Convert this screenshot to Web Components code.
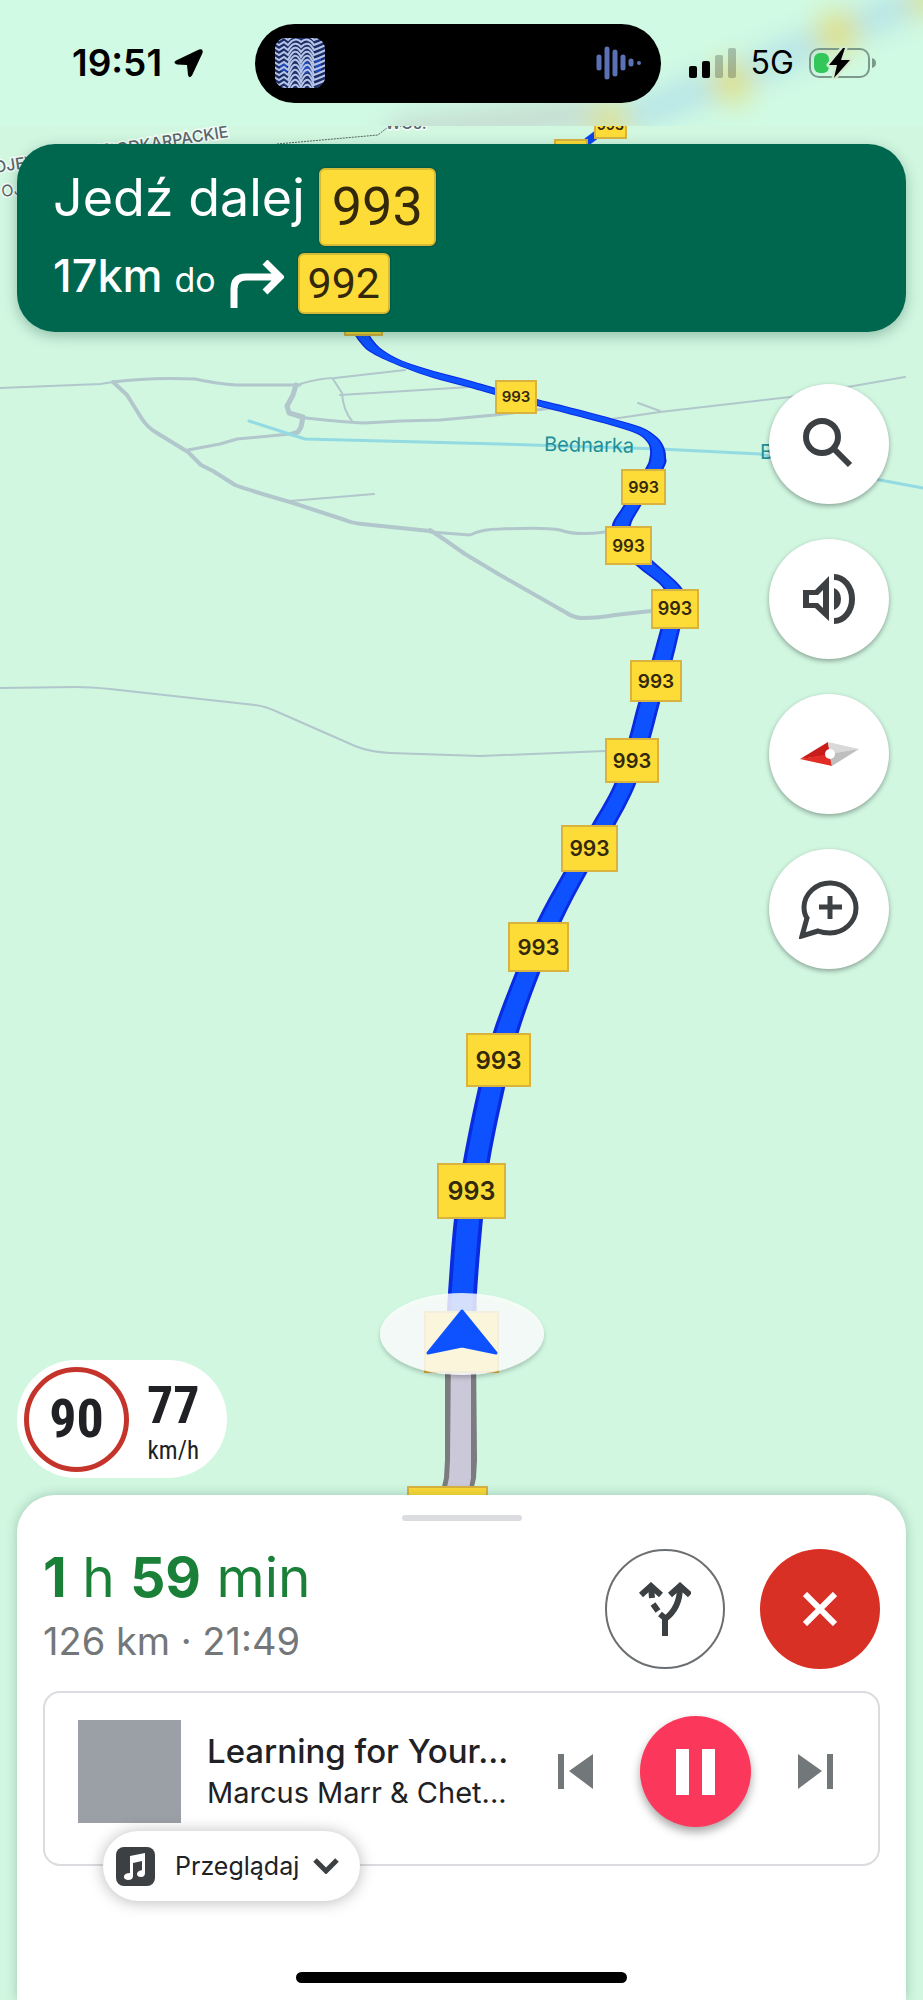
<!DOCTYPE html>
<html lang="pl">
<head>
<meta charset="utf-8">
<meta name="viewport" content="width=device-width, initial-scale=1">
<title>Nawigacja</title>
<style>
body { margin: 0; font-family: Inter, "Liberation Sans", sans-serif; background: #d1f7e1; }
</style>
</head>
<body>
<nav-screen></nav-screen>
<script>
const define = (name, html, setup) => {
  const template = document.createElement('template');
  template.innerHTML = html;
  customElements.define(name, class extends HTMLElement {
    constructor() {
      super();
      this.attachShadow({ mode: 'open' }).append(template.content.cloneNode(true));
    }
    connectedCallback() { if (setup) setup(this.shadowRoot, this); }
  });
};

/* Map canvas: roads, route, shields and the position marker */
const SHIELDS = [
  [344, 305, 39, 31, 0], [554, 139, 34, 26, 0], [594, 110, 33, 29, 14],
  [495, 380, 42, 34, 15], [621, 469, 45, 36, 16], [605, 526, 47, 39, 17],
  [651, 589, 48, 40, 18], [630, 660, 52, 42, 19], [605, 738, 54, 45, 20],
  [561, 825, 57, 47, 21], [508, 922, 61, 50, 22], [466, 1033, 65, 54, 24],
  [437, 1163, 69, 56, 25], [424, 1311, 75, 62, 0], [407, 1486, 81, 60, 0]
];
/* left edge x,y and right edge x,y of the route ribbon */
const ROUTE = [
  [352,330,367,330],[358,340,373,340],[370,352,383,350],[397,365,403,361],[433,378,434,371],
  [467,387,468,380],[495,395,496,388],[537,406,537,399],[580,417,581,410],[613,426,614,419],
  [637,434,641,427],[647,442,657,437],[650,450,664,447],[649,460,666,457],[645,469,664,468],
  [623,506,641,506],[612,525,631,525],[614,545,632,541],[639,568,652,560],[663,588,682,588],
  [667,608,686,608],[660,630,680,630],[652,659,673,659],[638,703,660,703],[629,737,651,737],
  [614,784,636,784],[592,824,616,824],[563,873,587,873],[537,921,562,921],[515,973,540,973],
  [493,1032,519,1032],[478,1088,505,1088],[463,1161,490,1161],[454,1219,483,1219],
  [448,1293,477,1293],[447,1318,477,1318]
];
const curve = pts => pts.slice(0, -1).map((p, i) => {
  const a = pts[i - 1] || p, q = pts[i + 1], b = pts[i + 2] || q;
  return `C${p[0] + (q[0] - a[0]) / 6} ${p[1] + (q[1] - a[1]) / 6} ${q[0] - (b[0] - p[0]) / 6} ${q[1] - (b[1] - p[1]) / 6} ${q[0]} ${q[1]}`;
}).join('');
const ribbon = inset => {
  const at = (r, t) => [r[0] + (r[2] - r[0]) * t, r[1] + (r[3] - r[1]) * t];
  const left = ROUTE.map(r => at(r, inset));
  const right = ROUTE.map(r => at(r, 1 - inset)).reverse();
  return `M${left[0]}${curve(left)}L${right[0]}${curve(right)}Z`;
};

define('route-map', `
<style>
:host { display: block; overflow: hidden; }
svg { display: block; width: 100%; height: 100%; }
.road { fill: none; stroke: #b1c7cb; stroke-linejoin: round; stroke-linecap: round; }
.river { fill: none; stroke: #93dae2; stroke-width: 3; stroke-linejoin: round; stroke-linecap: round; }
.shield rect { fill: #fedc38; stroke: #d9b340; stroke-width: 2; }
.shield text { fill: #33290a; font-weight: 600; text-anchor: middle; }
.place { fill: #1d8f99; font-size: 20px; }
.region { fill: #59666b; stroke: #f3fdf7; stroke-width: 3; paint-order: stroke; font-size: 16px; font-weight: 500; }
</style>
<svg viewBox="0 0 923 2000" preserveAspectRatio="xMidYMin slice" role="img" aria-label="Mapa">
  <path d="M277 144L378 135L388 127L440 124" fill="none" stroke="#56655f" stroke-dasharray="2 1"/>
  <g class="region">
    <text x="229" y="137" text-anchor="end" transform="rotate(-9 229 137)">PODKARPACKIE</text>
    <text x="-5" y="173" transform="rotate(-9 -5 173)">OJEWÓDZTWO</text>
    <text x="2" y="197" transform="rotate(-7 2 197)" font-weight="400">OJ.</text>
    <text x="385" y="129">WOJ.</text>
  </g>
  <g class="road" stroke-width="2">
    <path d="M0 388L100 384L120 381"/>
    <path d="M300 384Q320 378 335 378L405 370"/>
    <path d="M333 379L342 393Q343 410 352 421"/>
    <path d="M340 395L470 387"/>
    <path d="M290 501L374 494"/>
    <path d="M0 688L75 687Q90 687 110 689L255 705Q265 706 280 713L355 746Q370 752 390 753L480 756L605 751"/>
    <path d="M605 420L660 412L790 397L905 377M638 403L660 411"/>
  </g>
  <g class="road" stroke-width="3">
    <path d="M113 382Q150 377 195 379Q225 385 240 385L300 385"/>
    <path d="M290 434L237 439L220 444L188 450"/>
    <path d="M298 417Q340 422 365 423L400 421L440 420L495 415L560 407"/>
    <path d="M430 532L470 535Q482 529 500 529Q545 527 560 530Q575 536 605 532"/>
  </g>
  <g class="road" stroke-width="4">
    <path d="M113 382L127 395L142 419Q148 428 157 433L188 452L201 465L213 471L235 485Q245 489 290 502L345 520Q352 523 362 524L430 531"/>
    <path d="M430 530L445 540L465 554L500 575L565 612Q574 618 582 618Q600 618 615 615L651 611"/>
  </g>
  <g class="road" stroke-width="5">
    <path d="M296 385L293 395L287 406L289 413L303 417L301 427L298 432L292 434"/>
  </g>
  <path class="river" d="M249 421L305 439L500 444L660 449L760 454L880 480L923 488"/>
  <text class="place" x="544" y="451" transform="rotate(1 544 451)">Bednarka</text>
  <text class="place" x="760" y="459">Bednarka</text>
  <path d="M445 1350L445 1460L444 1478L439 1500H471L476 1478L477 1460L476 1350Z" fill="#7b7b80"/>
  <path d="M451 1350L450 1460L449 1478L444 1500H467L471 1478L471 1460L471 1350Z" fill="#cbc8d9"/>
  <path d="M580 150L588 141L608 126L640 118" fill="none" stroke="#0a45ee" stroke-width="8"/>
  <path id="edge" fill="#0a2be0"/>
  <path id="core" fill="#0e51ff"/>
  <g id="shields"></g>
  <filter id="drop" x="-20%" y="-20%" width="140%" height="150%"><feDropShadow dx="0" dy="3" stdDeviation="2" flood-color="#000" flood-opacity=".25"/></filter>
  <ellipse cx="462" cy="1334" rx="82" ry="41" fill="#fff" fill-opacity=".8" filter="url(#drop)"/>
  <path d="M462 1311L496 1353L462 1346L428 1353Z" fill="#0e51ff" stroke="#0e51ff" stroke-width="3" stroke-linejoin="round"/>
</svg>`, root => {
  root.getElementById('edge').setAttribute('d', ribbon(0));
  root.getElementById('core').setAttribute('d', ribbon(0.13));
  root.getElementById('shields').innerHTML = SHIELDS.map(([x, y, w, h, size]) =>
    `<g class="shield"><rect x="${x + 1}" y="${y + 1}" width="${w - 2}" height="${h - 2}"/>` +
    (size ? `<text x="${x + w / 2}" y="${Math.round(y + h / 2 + size * 0.36)}" font-size="${size}">993</text>` : '') + '</g>').join('');
});

define('status-bar', `
<style>
:host { display: grid; grid-template-columns: minmax(0, 1fr) 406px minmax(0, 1fr); align-items: center; box-sizing: border-box; height: 126px; padding-right: 8px; position: relative; overflow: hidden; background: #d0fae3; color: #000; }
.haze { position: absolute; inset: 0; width: 100%; height: 100%; }
.left, .right, .island { position: relative; display: flex; align-items: center; }
.left { padding-left: 72px; gap: 12px; }
.time { font-size: 37px; font-weight: 600; line-height: 44px; }
.island { height: 79px; box-sizing: border-box; padding: 0 20px; border-radius: 40px; background: #000; justify-content: space-between; }
.right { padding-left: 28px; gap: 15px; }
.net { font-size: 32px; font-weight: 400; line-height: 40px; }
svg { display: block; flex: none; }
</style>
<svg class="haze" viewBox="0 0 923 126" preserveAspectRatio="xMidYMin slice" aria-hidden="true">
  <filter id="b" x="-20%" y="-60%" width="140%" height="220%"><feGaussianBlur stdDeviation="14"/></filter>
  <g filter="url(#b)">
    <path d="M390 135L600 112" stroke="#c3d6cd" stroke-width="26"/>
    <path d="M600 128L732 78L837 34L930 -6" stroke="#b2e0e8" stroke-width="26" fill="none"/>
    <g fill="#e0dd7c"><circle cx="611" cy="121" r="18"/><circle cx="732" cy="82" r="20"/><circle cx="837" cy="33" r="21"/><circle cx="925" cy="0" r="16"/></g>
  </g>
</svg>
<div class="left">
  <span class="time">19:51</span>
  <svg width="29" height="29" viewBox="0 0 29 29"><path d="M25 .5L2 11.500Q-1.500 14 3 15.500L13 16L14 26Q15 30 18 26.500L28.500 4Q29.500 -1 25 .5Z"/></svg>
</div>
<div class="island">
  <svg width="50" height="50" viewBox="0 0 50 50">
    <clipPath id="c"><rect width="50" height="50" rx="11"/></clipPath>
    <g clip-path="url(#c)"><rect width="50" height="50" fill="#1d2f66"/><path d="M4 26L12 24V34L6 33ZM24 30L32 20L36 34L28 36ZM40 22L46 20V34H40Z" fill="#2348b8"/><g id="waves" fill="none" stroke="#b7c6e8" stroke-width="2"></g></g>
  </svg>
  <svg width="45" height="36" viewBox="0 0 45 36" stroke="#5a72b4" stroke-width="5" stroke-linecap="round"><path d="M3 12V23M11 4V32M19 7V29M27 12V23M35 16V19"/><path d="M43 18V18" stroke-width="4"/></svg>
</div>
<div class="right">
  <svg width="47" height="30" viewBox="0 0 47 30"><rect y="18" width="8" height="12" rx="2"/><rect x="13" y="13" width="8" height="17" rx="2"/><g fill="#000" fill-opacity=".22"><rect x="26" y="7" width="8" height="23" rx="2"/><rect x="39" width="8" height="30" rx="2"/></g></svg>
  <span class="net">5G</span>
  <svg width="67" height="32" viewBox="0 0 67 32"><rect x="1" y="2" width="59" height="28" rx="9" fill="none" stroke="#7b9a8c" stroke-width="2"/><path d="M63 11Q67 12 67 16T63 21Z" fill="#7b9a8c"/><rect x="5" y="6" width="15" height="20" rx="6" fill="#33c759"/><path d="M34 1L20 18H28L25 31L41 13H32L36 1Z" stroke="#d3eccf" stroke-width="5" stroke-linejoin="round"/><path d="M34 1L20 18H28L25 31L41 13H32L36 1Z"/></svg>
</div>`, root => {
  /* ripples with a folded middle, spaced widely enough to stay apart on the slopes */
  let lines = '';
  for (let i = 0; i < 14; i++) {
    const y = -1 + i * 5, k = Math.min(i, 6);
    lines += `<path d="M-1 ${y}L4 ${y + 3}L9 ${y}L13 ${y + 3}Q20 ${y - 4 - k * 2} 26 ${y}Q33 ${y - 4 - k * 2} 39 ${y + 3}L44 ${y + 1}L51 ${y - 2}"/>`;
  }
  root.getElementById('waves').innerHTML = lines;
});

define('road-sign', `
<style>
:host { display: flex; align-items: center; justify-content: center; box-sizing: border-box; width: 117px; height: 78px; border: 2px solid #d3bb35; border-radius: 6px; background: #fedc38; color: #33290a; font-family: Roboto, sans-serif; font-size: 54px; line-height: 1; box-shadow: 0 0 2px #00352a; }
:host([size="small"]) { width: 92px; height: 61px; font-size: 43px; }
</style>
<slot></slot>`);

define('turn-banner', `
<style>
:host { display: flex; flex-direction: column; gap: 7px; margin: 18px 17px 0; padding: 24px 36px 18px; border-radius: 38px; background: #00674f; color: #fff; box-shadow: 0 4px 14px rgba(0, 60, 40, .3); }
.row { display: flex; gap: 14px; align-items: flex-start; }
.road { font-size: 52px; line-height: 60px; }
.distance { font-size: 45px; line-height: 46px; font-weight: 500; }
small { font-size: 34px; font-weight: 400; }
svg { align-self: center; }
</style>
<div class="row"><span class="road">Jedź dalej</span><road-sign>993</road-sign></div>
<div class="row"><span class="distance">17km <small>do</small></span>
  <svg width="54" height="48" viewBox="0 0 54 48" fill="none" stroke="#fff" stroke-width="7" aria-label="skręć w prawo"><path d="M4 48V29Q4 17 16 17H49M35 2L50 17L35 32"/></svg>
  <road-sign size="small">992</road-sign></div>`);

define('round-button', `
<style>
:host { display: block; }
button { display: flex; align-items: center; justify-content: center; width: 120px; height: 120px; padding: 0; border: 0; border-radius: 50%; background: #fff; color: #3c4043; box-shadow: 0 2px 5px rgba(0, 0, 0, .35); }
:host([kind="outline"]) button { border: 2px solid #6b6f72; box-shadow: none; }
:host([kind="danger"]) button { background: #d93025; color: #fff; box-shadow: none; }
:host([kind="play"]) button { width: 111px; height: 111px; background: #fb375b; color: #fff; box-shadow: 0 5px 10px rgba(0, 0, 0, .35); }
:host([kind="plain"]) button { width: 35px; height: 48px; border-radius: 0; background: none; color: #72777a; box-shadow: none; }
</style>
<button type="button"><slot></slot></button>`, (root, host) => {
  root.querySelector('button').setAttribute('aria-label', host.getAttribute('label'));
});

define('map-controls', `
<style>:host { display: flex; flex-direction: column; align-items: flex-end; gap: 35px; margin: 52px 34px 0; } svg { display: block; }</style>
<round-button label="Szukaj"><svg width="60" height="60" viewBox="0 0 60 60" fill="none" stroke="#3c4043"><circle cx="23" cy="23" r="16" stroke-width="6"/><path d="M36 36L51 51" stroke-width="6"/></svg></round-button>
<round-button label="Dźwięk"><svg width="60" height="60" viewBox="0 0 60 60"><path d="M4 21H16L30 7V52L16 39H4ZM10 26V34H19L24 39V21L19 26Z" fill="#3c4043" fill-rule="evenodd"/><path d="M35 19Q42 22 42 30T35 41Z" fill="#3c4043"/><path d="M35 8A18 22 0 0 1 35 52" fill="none" stroke="#3c4043" stroke-width="6"/></svg></round-button>
<round-button label="Kompas"><svg width="60" height="24" viewBox="0 0 60 24"><path d="M29 0L1 17L31 13Z" fill="#c91d1c"/><path d="M1 17L33 24L31 12Z" fill="#e22c26"/><path d="M29 0L60 7L31 12Z" fill="#d9d9d9"/><path d="M60 7L33 24L30 12Z" fill="#bfbfbf"/><circle cx="31" cy="12" r="5" fill="#fff"/></svg></round-button>
<round-button label="Zgłoś"><svg width="60" height="60" viewBox="0 0 60 60" fill="none" stroke="#3c4043"><path d="M3 57L8 39Q5 35 5 28A26 25 0 1 1 31 54Q24 54 19 52Z" stroke-width="5"/><path d="M31 17V40M20 28H43" stroke-width="5"/></svg></round-button>`);

define('speed-badge', `
<style>
:host { display: flex; align-self: flex-start; align-items: center; box-sizing: border-box; gap: 18px; margin: auto 0 17px 17px; height: 118px; padding: 0 27px 0 7px; border-radius: 59px; background: #fff; color: #202124; font-family: "Roboto Condensed", "Liberation Sans Narrow", sans-serif; }
.limit { display: flex; align-items: center; justify-content: center; box-sizing: border-box; width: 105px; height: 105px; border: 5px solid #c5342b; border-radius: 50%; font-size: 54px; font-weight: 700; line-height: 1; }
.now { display: flex; flex-direction: column; align-items: center; padding-top: 4px; }
.value { font-size: 52px; line-height: 60px; font-weight: 700; }
.unit { font-size: 25px; line-height: 30px; font-weight: 400; }
</style>
<div class="limit">90</div>
<div class="now"><span class="value">77</span><span class="unit">km/h</span></div>`);

define('media-card', `
<style>
:host { display: block; position: relative; margin-top: 22px; padding: 23px 45px 37px 33px; border: 2px solid #dadce0; border-radius: 17px; color: #202124; }
.row { display: flex; align-items: center; height: 111px; }
.art { flex: none; width: 103px; height: 103px; background: #9aa0a6; }
.track { flex: 1; min-width: 0; margin: 0 48px 0 26px; white-space: nowrap; }
.title { font-size: 33px; line-height: 42px; font-weight: 500; }
.artist { font-size: 29px; line-height: 42px; }
.player { display: flex; align-items: center; gap: 47px; }
.browse { position: absolute; left: 58px; bottom: -37px; display: flex; align-items: center; gap: 20px; height: 70px; padding: 0 21px 0 13px; border: 0; border-radius: 35px; background: #fff; color: #202124; font: 400 25px/32px Inter, sans-serif; box-shadow: 0 1px 16px rgba(0, 0, 0, .28); }
.browse svg:last-child { margin-left: -6px; }
svg { display: block; flex: none; }
</style>
<div class="row">
  <div class="art"></div>
  <div class="track"><div class="title">Learning for Your...</div><div class="artist">Marcus Marr &amp; Chet...</div></div>
  <div class="player">
    <round-button kind="plain" label="Poprzedni"><svg width="35" height="35" viewBox="0 0 35 35" fill="#72777a"><path d="M0 0H6V35H0ZM35 0V35L11 17Z"/></svg></round-button>
    <round-button kind="play" label="Pauza"><svg width="39" height="46" viewBox="0 0 39 46" fill="#fff"><path d="M0 0H13V46H0ZM26 0H39V46H26Z"/></svg></round-button>
    <round-button kind="plain" label="Następny"><svg width="35" height="35" viewBox="0 0 35 35" fill="#72777a"><path d="M29 0H35V35H29ZM0 0V35L24 17Z"/></svg></round-button>
  </div>
</div>
<button class="browse" type="button">
  <svg width="39" height="39" viewBox="0 0 39 39"><rect width="39" height="39" rx="8" fill="#3c4043"/><path d="M14 9L29 6V26Q29 30 25 30T21 27Q21 24 26 23V14L17 16V29Q17 33 12 33Q7 32 8 29Q9 26 14 26Z" fill="#fff"/></svg>
  <span>Przeglądaj</span>
  <svg width="26" height="16" viewBox="0 0 26 16" fill="none" stroke="#3c4043" stroke-width="5"><path d="M2 2L13 13L24 2"/></svg>
</button>`);

define('trip-sheet', `
<style>
:host { display: flex; flex-direction: column; margin: 0 17px; padding: 20px 26px 17px; border-radius: 38px 38px 0 0; background: #fff; box-shadow: 0 0 12px rgba(0, 60, 40, .25); }
.handle { align-self: center; width: 120px; height: 6px; border-radius: 3px; background: #dadce0; }
.trip { display: flex; align-items: center; gap: 35px; margin-top: 28px; }
.info { flex: 1; display: flex; flex-direction: column; gap: 8px; }
.time { color: #1a8038; font-size: 55px; line-height: 56px; }
.detail { color: #747779; font-size: 38px; line-height: 56px; }
.home { align-self: center; width: 331px; height: 11px; margin-top: 106px; border-radius: 6px; background: #000; }
</style>
<div class="handle"></div>
<div class="trip">
  <div class="info"><div class="time"><b>1</b> h <b>59</b> min</div><div class="detail">126 km · 21:49</div></div>
  <round-button kind="outline" label="Inne trasy"><svg width="52" height="54" viewBox="0 0 52 54" fill="none" stroke="#3c4043" stroke-width="6"><path d="M26 54V37Q41 26 41 5"/><path d="M12 5L13 16M14 22L19 29M21 32L27 37"/><path d="M2 13L12 4L22 13M31 13L41 4L51 13"/></svg></round-button>
  <round-button kind="danger" label="Zakończ"><svg width="34" height="34" viewBox="0 0 34 34" fill="none" stroke="#fff" stroke-width="6"><path d="M2 2L32 32M32 2L2 32"/></svg></round-button>
</div>
<media-card></media-card>
<div class="home"></div>`);

define('nav-screen', `
<style>
:host { position: relative; display: flex; flex-direction: column; min-height: 100vh; overflow: hidden; }
route-map { position: absolute; inset: 0; }
status-bar, turn-banner, map-controls, speed-badge, trip-sheet { position: relative; }
</style>
<route-map></route-map>
<status-bar></status-bar>
<turn-banner></turn-banner>
<map-controls></map-controls>
<speed-badge></speed-badge>
<trip-sheet></trip-sheet>`);
</script>
</body>
</html>
